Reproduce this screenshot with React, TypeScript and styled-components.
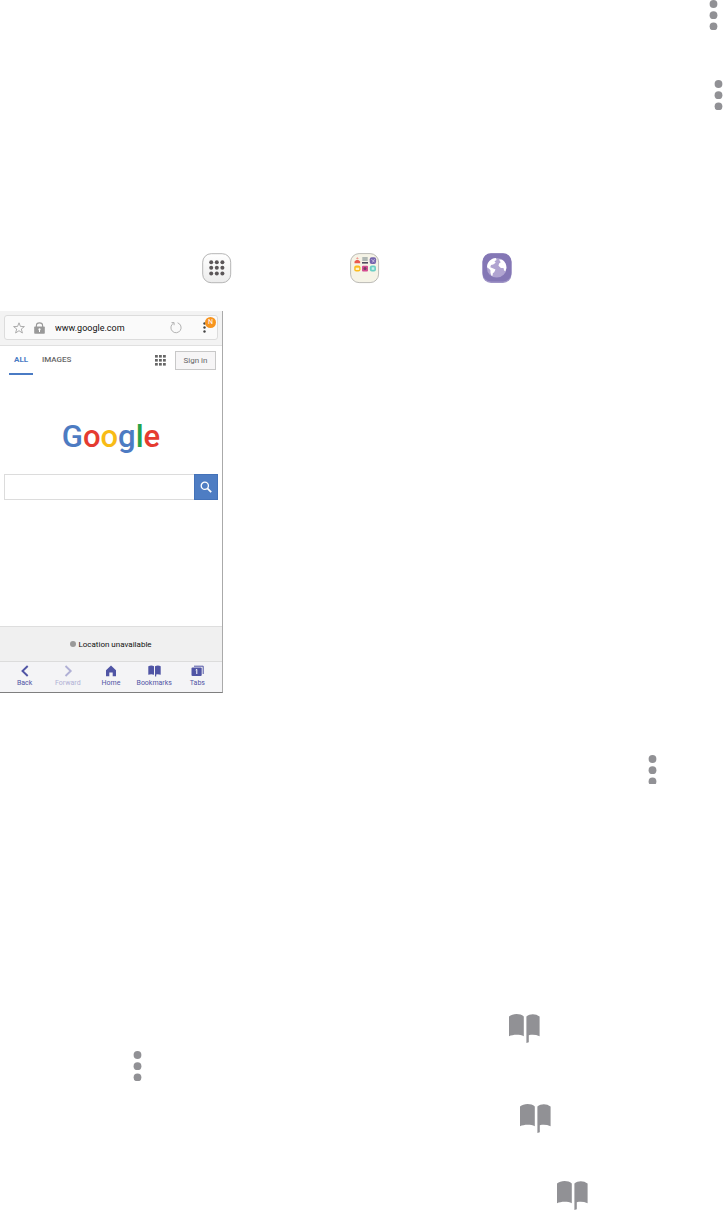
import React from "react";
import styled, { createGlobalStyle } from "styled-components";

const GlobalStyle = createGlobalStyle`
  *, *::before, *::after { box-sizing: border-box; }
  body { margin: 0; background: #fff; font-family: Roboto, "Liberation Sans", sans-serif; }
  button, input { font-family: inherit; margin: 0; }
  svg { display: block; }
`;

const Page = styled.main`
  display: flex;
  flex-direction: column;
  width: 100%;
  overflow-x: hidden;
`;

const IconRow = styled.div<{ $above?: number; $start?: number; $end?: number }>`
  display: flex;
  justify-content: ${(p) => (p.$end === undefined ? "flex-start" : "flex-end")};
  margin-top: ${(p) => p.$above ?? 0}px;
  padding-left: ${(p) => p.$start ?? 0}px;
  padding-right: ${(p) => p.$end ?? 0}px;
`;

const AppRow = styled(IconRow)`
  & > svg:nth-child(2) { margin-left: 118px; }
  & > svg:nth-child(3) { margin-left: 102px; }
`;

const Phone = styled.section`
  display: flex;
  flex-direction: column;
  width: 223px;
  margin-top: 27px;
  border-right: 1px solid #aaa;
  border-bottom: 1px solid #7f7f7f;
  background: #fff;
`;

const AddressBar = styled.header`
  padding: 4px 4px 5px;
  background: #f3f3f3;
  border-bottom: 1px solid #e0e0e0;
`;

const AddressField = styled.div`
  position: relative;
  display: flex;
  align-items: center;
  height: 25px;
  padding: 0 8px;
  border: 1px solid #dcdcdc;
  border-radius: 3px;
  background: #fafafa;
`;

const PlainButton = styled.button`
  display: flex;
  align-items: center;
  justify-content: center;
  padding: 0;
  border: 0;
  background: none;
  color: #777;
`;

const LockSlot = styled.span`
  margin-left: 9px;
`;

const UrlInput = styled.input`
  flex: 1;
  min-width: 0;
  height: 20px;
  margin-left: 10px;
  padding: 0;
  border: 0;
  background: none;
  color: #111;
  font-size: 9px;
  font-weight: 400;
`;

const MenuButton = styled(PlainButton)`
  width: 8px;
  margin-left: 18px;
  margin-right: 1px;
`;

const Badge = styled.span`
  position: absolute;
  top: 1px;
  right: 1px;
  width: 11px;
  height: 11px;
  border-radius: 50%;
  background: #f7941e;
  color: #fff;
  font-size: 7px;
  line-height: 11px;
  text-align: center;
`;

const SearchTabs = styled.div`
  display: flex;
  align-items: center;
  height: 29px;
  padding: 0 6px 0 9px;
`;

const TabLink = styled.a<{ $active?: boolean }>`
  height: 29px;
  padding: 0 5px;
  border-bottom: 2px solid ${(p) => (p.$active ? "#4a7bc4" : "transparent")};
  color: ${(p) => (p.$active ? "#4a7bc4" : "#666")};
  font-size: 8px;
  font-weight: ${(p) => (p.$active ? 700 : 500)};
  line-height: 28px;
  text-decoration: none;
  & + & { margin-left: 4px; }
`;

const GridButton = styled(PlainButton)`
  margin-left: auto;
`;

const SignIn = styled.button`
  width: 41px;
  height: 19px;
  margin-left: 9px;
  padding: 0 0 1px;
  border: 1px solid #c8c8c8;
  background: #f6f5f6;
  color: #666;
  font-size: 8px;
`;

const Logo = styled.h1`
  margin: 42px 0 0;
  font-size: 31px;
  font-weight: 500;
  line-height: 40px;
  text-align: center;
`;

const Letter = styled.span<{ $tone: string }>`
  color: ${(p) => p.$tone};
`;

const SearchForm = styled.form`
  display: flex;
  height: 26px;
  margin: 17px 4px 126px;
`;

const SearchInput = styled.input`
  flex: 1;
  min-width: 0;
  padding: 0 6px;
  border: 1px solid #dcdcdc;
  border-right: 0;
  background: #fff;
  font-size: 10px;
`;

const SearchButton = styled(PlainButton)`
  width: 24px;
  background: #4e7dc3;
  border: 1px solid #4472b8;
`;

const LocationBar = styled.p`
  display: flex;
  align-items: center;
  justify-content: center;
  gap: 2px;
  height: 35px;
  margin: 0;
  border-top: 1px solid #dedede;
  background: #f0f0f0;
  color: #111;
  font-size: 8px;
`;

const Dot = styled.span`
  width: 6px;
  height: 6px;
  border-radius: 50%;
  background: #999;
`;

const NavBar = styled.nav`
  display: flex;
  height: 31px;
  padding: 0 3px;
  border-top: 1px solid #dcdcdc;
  background: #f4f4f6;
`;

const NavButton = styled.button`
  display: flex;
  flex: 1 1 0;
  flex-direction: column;
  align-items: center;
  min-width: 0;
  padding: 3px 0 0;
  border: 0;
  background: none;
  color: #5055a5;
  font-size: 7px;
  line-height: 9px;
  &:disabled { color: #b0b0d5; }
  svg { margin-bottom: 2px; }
`;

const MoreIcon = ({ cut = false }: { cut?: boolean }) => (
  <svg width="9" height={cut ? 29 : 30} viewBox={cut ? "0 0 9 29" : "0 0 9 30"} fill="#919195" aria-hidden="true">
    <circle cx="4.5" cy="4" r="3.9" />
    <circle cx="4.5" cy="15.2" r="3.9" />
    <circle cx="4.5" cy="26.4" r="3.9" />
  </svg>
);

const BookIcon = () => (
  <svg width="31" height="29" viewBox="0 0 31 29" fill="#919195" aria-hidden="true">
    <path d="M0 2.6C3.5-.6 11-.8 14.8 2.4V22.2C11 20.3 4 20.3 0 22.3Z" />
    <path d="M17.4 2.4C21-.7 27-.6 30.6 2.6V22.2C27 20.7 23 20.5 19.8 21.3V28.2L17.4 29Z" />
  </svg>
);

const AppsIcon = () => (
  <svg width="30" height="31" viewBox="0 0 30 31" aria-hidden="true">
    <defs>
      <linearGradient id="tile" x1="0" x2="0" y1="0" y2="1">
        <stop stopColor="#fff" />
        <stop offset="1" stopColor="#ececec" />
      </linearGradient>
    </defs>
    <rect x=".7" y=".7" width="28" height="29" rx="8.5" fill="url(#tile)" stroke="#b5b5b5" />
    {[9.2, 14.8, 20.4].map((y) =>
      [9.2, 14.8, 20.4].map((x) => <circle key={x + "-" + y} cx={x} cy={y} r="2" fill="#5b5658" />)
    )}
  </svg>
);

const FolderIcon = () => (
  <svg width="30" height="31" viewBox="0 0 30 31" aria-hidden="true">
    <rect x=".6" y=".6" width="28" height="29" rx="8.5" fill="#f5f3e6" stroke="#bbbab5" />
    <path d="M4.5 8.5Q7.3 5 10.2 8.5V10.3H4.5Z" fill="#e9594e" />
    <path d="M6 6l1.3-2L8.8 6Z" fill="#f29a91" />
    <path d="M12.3 5h5.4M12.3 7h5.4" stroke="#99a5a4" strokeWidth="1.3" />
    <path d="M12 9.8h6" stroke="#4f4b5c" strokeWidth="1.6" />
    <rect x="19.7" y="4.3" width="6.4" height="6.6" rx="2" fill="#7565ad" />
    <path d="M21.5 6.2l3 3M24.5 6.2l-2 3.2" stroke="#c8bde0" strokeWidth="1" />
    <rect x="4.2" y="12.4" width="6.3" height="6.2" rx="2" fill="#fbbc21" />
    <path d="M5.7 14.7h3.5v2.3H5.7Z" fill="#fff4c9" />
    <rect x="12" y="12.7" width="6" height="5.7" rx="1" fill="#d44c91" />
    <circle cx="15" cy="15.6" r="1.5" fill="#704060" />
    <rect x="19.8" y="12.4" width="6.2" height="6.2" rx="2" fill="#6bcfc5" />
    <path d="M21.7 14.3h2.6v2.5h-2.6Z" fill="#c7f1e9" />
  </svg>
);

const GlobeIcon = () => (
  <svg width="30" height="31" viewBox="0 0 30 31" aria-hidden="true">
    <rect x=".5" y=".5" width="29" height="29.5" rx="8.5" fill="#9f94c6" />
    <rect x=".5" y=".2" width="29" height="28.3" rx="8.5" fill="#8477b5" />
    <circle cx="14.7" cy="14.8" r="9.8" fill="#b0a4d1" />
    <path d="M5 14.2C5.2 9 9 5.2 13.8 5L14.6 7.1L12.5 8.2L13.7 9.8L11.2 11.5L9 12.1L8.3 14.3L10.7 15.2L13.5 16.6L12.2 19.2L10.8 20.2L10.6 22.6L9.7 23.1L8.5 20L8.4 17.1L6.4 15.2Z" fill="#fff" />
    <path d="M17 6.6L20.1 6.8C23 8.7 24.6 11.7 24.4 15L23.4 18.3L22.1 17.5L21.5 14.9L18.9 15.1L16.5 12.8L17.1 10.4L18.7 9.2Z" fill="#fff" />
  </svg>
);

const StarIcon = () => (
  <svg width="12" height="12" viewBox="0 0 12 12" fill="none" stroke="#999" aria-hidden="true">
    <path d="M6 .8L7.4 4.4L11.4 4.6L8.3 7L9.4 11L6 8.7L2.6 11L3.7 7L.6 4.6L4.6 4.4Z" strokeWidth=".8" />
  </svg>
);

const LockIcon = () => (
  <svg width="11" height="12" viewBox="0 0 11 12" aria-hidden="true">
    <path d="M2.4 5V3.6C2.4-.1 8.6-.1 8.6 3.6V5" fill="none" stroke="#999" strokeWidth="1.1" />
    <rect x=".2" y="4.6" width="10.6" height="7.2" rx=".8" fill="#999" />
    <circle cx="5.5" cy="7.4" r="1.1" fill="#fff" />
    <path d="M5 7.5h1v2.5H5Z" fill="#fff" />
  </svg>
);

const ReloadIcon = () => (
  <svg width="12" height="13" viewBox="0 0 12 13" fill="none" stroke="#aaa" aria-hidden="true">
    <path d="M7.6 1.8A5.1 5.1 0 1 1 3.5 2.2M1.5 1.6H4.1V4.2" strokeWidth=".9" />
  </svg>
);

const NavBook = () => (
  <svg width="13" height="12" viewBox="0 0 13 12" fill="currentColor" aria-hidden="true">
    <path d="M.3 1.3Q3.4-.3 6 1.3V9.8Q3.3 8.8.3 9.8Z" />
    <path d="M7 1.3Q10-.3 12.7 1.3V9.8Q10.2 8.8 8.2 9.4V11.5H7Z" />
  </svg>
);

const letters = [
  ["G", "#4d7bc2"],
  ["o", "#e53b30"],
  ["o", "#f8bb16"],
  ["g", "#4d7bc2"],
  ["l", "#26a34a"],
  ["e", "#e53b30"],
];

export default function App() {
  return (
    <>
      <GlobalStyle />
      <Page>
        <IconRow $end={7}><MoreIcon /></IconRow>
        <IconRow $above={50} $end={2}><MoreIcon /></IconRow>
        <AppRow $above={143} $start={202}>
          <AppsIcon />
          <FolderIcon />
          <GlobeIcon />
        </AppRow>
        <Phone>
          <AddressBar>
            <AddressField>
              <PlainButton type="button" aria-label="Add bookmark"><StarIcon /></PlainButton>
              <LockSlot><LockIcon /></LockSlot>
              <UrlInput aria-label="Address" defaultValue="www.google.com" />
              <PlainButton type="button" aria-label="Reload"><ReloadIcon /></PlainButton>
              <MenuButton type="button" aria-label="More options">
                <svg width="3" height="11" viewBox="0 0 3 11" fill="#444" aria-hidden="true">
                  <circle cx="1.5" cy="1.5" r="1.2" />
                  <circle cx="1.5" cy="5.5" r="1.2" />
                  <circle cx="1.5" cy="9.5" r="1.2" />
                </svg>
              </MenuButton>
              <Badge>N</Badge>
            </AddressField>
          </AddressBar>
          <SearchTabs>
            <TabLink href="#all" $active>ALL</TabLink>
            <TabLink href="#images">IMAGES</TabLink>
            <GridButton type="button" aria-label="Apps">
              <svg width="11" height="11" viewBox="0 0 11 11" fill="#666" aria-hidden="true">
                {[0, 4, 8].map((y) => [0, 4, 8].map((x) => <rect key={x + "-" + y} x={x} y={y} width="2.8" height="2.6" />))}
              </svg>
            </GridButton>
            <SignIn type="button">Sign in</SignIn>
          </SearchTabs>
          <Logo>
            {letters.map(([char, tone], i) => <Letter key={i} $tone={tone}>{char}</Letter>)}
          </Logo>
          <SearchForm onSubmit={(e) => e.preventDefault()}>
            <SearchInput type="search" aria-label="Search" />
            <SearchButton type="submit" aria-label="Search">
              <svg width="12" height="12" viewBox="0 0 12 12" fill="none" stroke="#fff" aria-hidden="true">
                <circle cx="4.8" cy="4.8" r="3.6" strokeWidth="1.3" />
                <path d="M7.4 7.4L11.2 11.2" strokeWidth="1.7" />
              </svg>
            </SearchButton>
          </SearchForm>
          <LocationBar><Dot />Location unavailable</LocationBar>
          <NavBar>
            <NavButton type="button">
              <svg width="12" height="12" viewBox="0 0 12 12" fill="none" stroke="currentColor" strokeWidth="1.9" aria-hidden="true"><path d="M8.7 1L3.5 6L8.7 11" /></svg>
              Back
            </NavButton>
            <NavButton type="button" disabled>
              <svg width="12" height="12" viewBox="0 0 12 12" fill="none" stroke="currentColor" strokeWidth="1.9" aria-hidden="true"><path d="M3.5 1L8.7 6L3.5 11" /></svg>
              Forward
            </NavButton>
            <NavButton type="button">
              <svg width="12" height="12" viewBox="0 0 12 12" fill="currentColor" aria-hidden="true"><path d="M1 5.2L6 .6L11 5.2V11.2H7.7V7.4H4.3V11.2H1Z" /></svg>
              Home
            </NavButton>
            <NavButton type="button"><NavBook />Bookmarks</NavButton>
            <NavButton type="button">
              <svg width="13" height="12" viewBox="0 0 13 12" aria-hidden="true">
                <path d="M3 1.2H12.2V9" fill="none" stroke="currentColor" strokeWidth="1" />
                <rect x=".5" y="2.6" width="10.2" height="8.4" rx="1" fill="currentColor" />
                <path d="M4.7 5L5.8 4.4V9" fill="none" stroke="#fff" strokeWidth="1" />
              </svg>
              Tabs
            </NavButton>
          </NavBar>
        </Phone>
        <IconRow $above={62} $start={648}><MoreIcon cut /></IconRow>
        <IconRow $above={230} $start={509}><BookIcon /></IconRow>
        <IconRow $above={8} $start={133}><MoreIcon /></IconRow>
        <IconRow $above={23} $start={520}><BookIcon /></IconRow>
        <IconRow $above={48} $start={557}><BookIcon /></IconRow>
      </Page>
    </>
  );
}
